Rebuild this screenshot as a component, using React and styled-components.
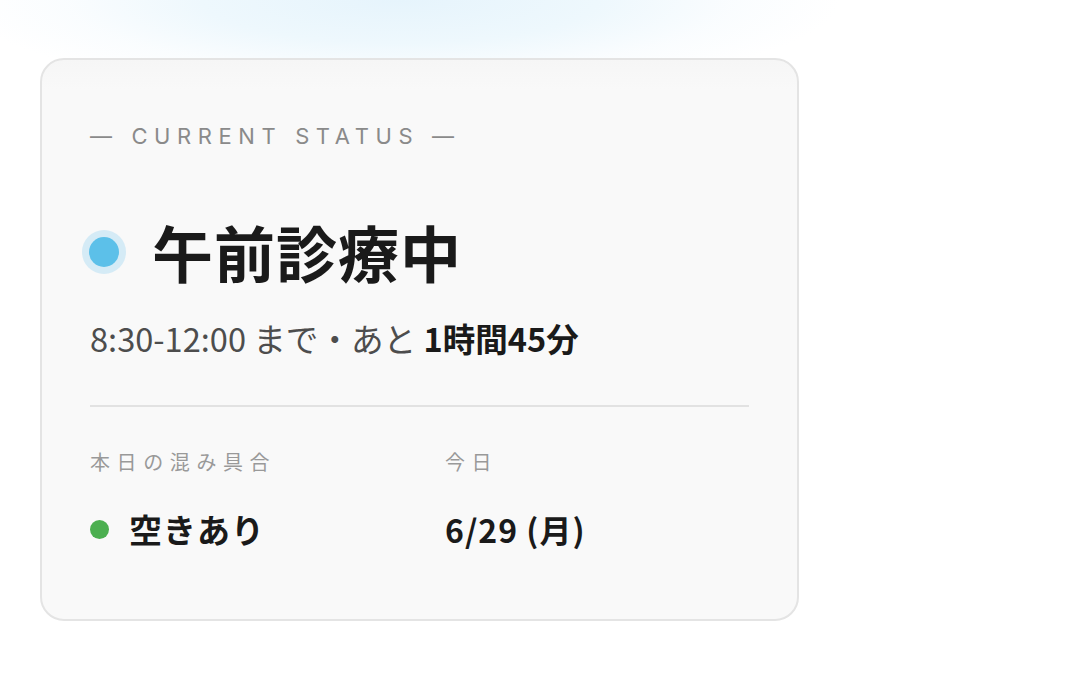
import React from 'react';
import styled, { createGlobalStyle } from 'styled-components';

const GlobalStyle = createGlobalStyle`
  html, body {
    margin: 0;
    padding: 0;
    background: #ffffff;
  }
  body {
    font-family: "Noto Sans CJK JP", "Noto Sans", sans-serif;
    color: #1a1a1a;
  }
`;

const Page = styled.div`
  width: 1080px;
  height: 676px;
  overflow: hidden;
`;

const Glow = styled.div`
  width: 860px;
  height: 58px;
  background: radial-gradient(
    ellipse 440px 95px at 400px 0px,
    #e6f4fc 0%,
    #eef8fd 45%,
    rgba(246, 251, 254, 0.6) 75%,
    rgba(255, 255, 255, 0) 100%
  );
`;

const Card = styled.section`
  box-sizing: border-box;
  width: 759px;
  height: 563px;
  margin-left: 40px;
  padding: 64px 48px 0 48px;
  background: linear-gradient(#f6f6f6 0px, #f9f9f9 30px, #f9f9f9 100%);
  border: 2px solid #e4e4e4;
  border-radius: 24px;
`;

const Eyebrow = styled.div`
  font-family: "Inter", "Noto Sans", sans-serif;
  font-size: 22px;
  line-height: 24px;
  letter-spacing: 6.6px;
  color: #8a8a8a;
`;

const StatusRow = styled.div`
  display: flex;
  align-items: center;
  gap: 33px;
  margin-top: 67px;
  margin-left: -1px;
`;

const Pulse = styled.span`
  flex: none;
  width: 30px;
  height: 30px;
  border-radius: 50%;
  background: ${(p) => p.color};
  box-shadow: 0 0 0 7px ${(p) => p.halo};
`;

const Title = styled.h1`
  margin: 0;
  font-size: 61px;
  line-height: 74px;
  font-weight: 700;
  letter-spacing: 1px;
  color: #1a1a1a;
`;

const Hours = styled.p`
  margin: 27px 0 0;
  font-size: 32.6px;
  line-height: 44px;
  color: #4d4d4d;

  strong {
    font-weight: 700;
    color: #1a1a1a;
  }
`;

const Divider = styled.hr`
  margin: 45px 0 0;
  border: none;
  border-top: 2px solid #e2e2e2;
`;

const InfoGrid = styled.div`
  display: grid;
  grid-template-columns: 355px 1fr;
  row-gap: 31px;
  margin-top: 41px;
`;

const Label = styled.div`
  font-size: 20px;
  line-height: 28px;
  letter-spacing: 6.6px;
  color: #999999;
`;

const Value = styled.div`
  display: flex;
  align-items: center;
  gap: 20px;
  font-size: ${(p) => p.size || 33}px;
  line-height: 44px;
  font-weight: 700;
  letter-spacing: ${(p) => p.spacing || 0}px;
  color: #1a1a1a;
`;

const Dot = styled.span`
  flex: none;
  width: 19px;
  height: 19px;
  border-radius: 50%;
  background: ${(p) => p.color};
`;

export default function App() {
  return (
    <Page>
      <GlobalStyle />
      <Glow />
      <Card>
        <Eyebrow>— CURRENT STATUS —</Eyebrow>
        <StatusRow>
          <Pulse color="#5cc0e9" halo="#d5ebf6" />
          <Title>午前診療中</Title>
        </StatusRow>
        <Hours>
          8:30-12:00 まで・あと <strong>1時間45分</strong>
        </Hours>
        <Divider />
        <InfoGrid>
          <Label>本日の混み具合</Label>
          <Label>今日</Label>
          <Value spacing={1}>
            <Dot color="#4caf50" />
            空きあり
          </Value>
          <Value size={32} spacing={1}>6/29 (月)</Value>
        </InfoGrid>
      </Card>
    </Page>
  );
}
